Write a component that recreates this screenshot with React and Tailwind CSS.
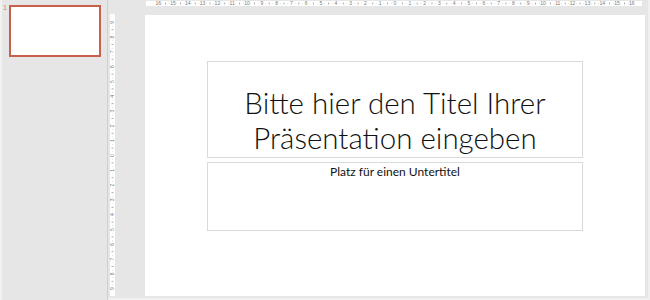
import React from "react";

const STEP = 14.8;

function TopRuler() {
  // 0 sits at the slide centre, 16 units each way
  const marks = [];
  for (let k = -16; k <= 16; k++) marks.push(k);
  const cx = 249;
  return (
    <svg width="496" height="5" className="block">
      <rect width="496" height="5" fill="#ffffff" />
      {marks.map((k) => (
        <text
          key={k}
          x={cx + k * STEP}
          y="4.4"
          fontSize="5"
          textAnchor="middle"
          fill="#7a7a7a"
          fontFamily="Liberation Sans, sans-serif"
        >
          {Math.abs(k)}
        </text>
      ))}
      {marks.slice(0, -1).map((k) => (
        <g key={"t" + k}>
          <rect x={cx + k * STEP + STEP / 2 - 0.4} y="1.5" width="0.8" height="2" fill="#9a9a9a" />
          <rect x={cx + k * STEP + STEP / 4 - 0.3} y="2.2" width="0.6" height="0.8" fill="#c4c4c4" />
          <rect x={cx + k * STEP + (3 * STEP) / 4 - 0.3} y="2.2" width="0.6" height="0.8" fill="#c4c4c4" />
        </g>
      ))}
    </svg>
  );
}

function SideRuler() {
  const marks = [];
  for (let k = -9; k <= 9; k++) marks.push(k);
  const cy = 141.5;
  return (
    <svg width="5" height="282" className="block">
      <rect width="5" height="282" fill="#ffffff" />
      {marks.map((k) => (
        <text
          key={k}
          x="0"
          y="0"
          fontSize="5"
          textAnchor="middle"
          fill="#7a7a7a"
          fontFamily="Liberation Sans, sans-serif"
          transform={`translate(4.2 ${cy + k * STEP}) rotate(-90)`}
        >
          {Math.abs(k)}
        </text>
      ))}
      {marks.slice(0, -1).map((k) => (
        <g key={"t" + k}>
          <rect x="1.5" y={cy + k * STEP + STEP / 2 - 0.4} width="2" height="0.8" fill="#9a9a9a" />
          <rect x="2.2" y={cy + k * STEP + STEP / 4 - 0.3} width="0.8" height="0.6" fill="#c4c4c4" />
          <rect x="2.2" y={cy + k * STEP + (3 * STEP) / 4 - 0.3} width="0.8" height="0.6" fill="#c4c4c4" />
        </g>
      ))}
    </svg>
  );
}

export default function App() {
  return (
    <div className="w-[650px] h-[300px] flex bg-[#e6e6e6] overflow-hidden font-['Lato',sans-serif]">
      {/* Thumbnail pane */}
      <div className="w-[107px] h-full flex shrink-0">
        <div className="w-[2px] h-full bg-[#f1f1f1]" />
        <div className="flex flex-1 pt-[4px]">
          <span className="w-[7px] pl-[1px] text-[7px] leading-[8px] text-[#c9887c] font-['Liberation_Sans',sans-serif]">
            1
          </span>
          <div className="mt-[1px] w-[92px] h-[52px] border-2 border-[#c8604c] bg-white" />
        </div>
      </div>
      <div className="w-[1px] h-full bg-[#cfcfcf] shrink-0" />

      {/* Editing area */}
      <div className="flex-1 flex flex-col">
        <div className="h-[15px] pt-[1px] pl-[38px]">
          <TopRuler />
        </div>
        <div className="flex">
          <div className="pl-[2px] -mt-[1px]">
            <SideRuler />
          </div>
          <div className="ml-[30px] w-[500px] h-[281px] bg-white flex flex-col items-center pt-[46px]">
            <div className="w-[376px] h-[97px] border border-[#dadada] flex flex-col justify-end items-center pb-[2px]">
              <p className="text-[29.5px] leading-[35px] font-light text-[#111] text-center whitespace-nowrap">
                Bitte hier den Titel Ihrer
                <br />
                Präsentation eingeben
              </p>
            </div>
            <div className="mt-[4px] w-[376px] h-[69px] border border-[#dadada] flex justify-center pt-[1px]">
              <p className="text-[12px] leading-[15px] text-[#111]">Platz für einen Untertitel</p>
            </div>
          </div>
          <div className="flex-1" />
        </div>
        <div className="flex-1" />
        <div className="h-[2px] bg-[#f0f0f0]" />
      </div>
      <div className="w-[2px] h-full bg-[#f0f0f0]" />
    </div>
  );
}
